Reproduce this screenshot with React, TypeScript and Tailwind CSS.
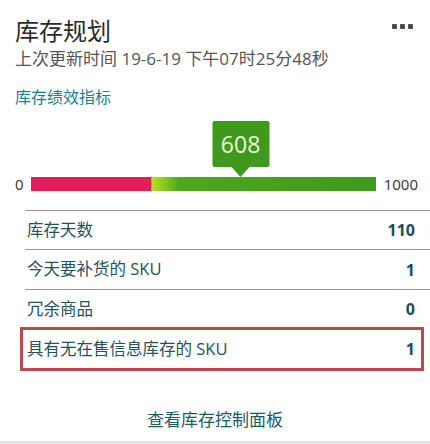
import React from 'react';

interface MetricRow {
    label: string;
    value: number;
}

const rows: MetricRow[] = [
    { label: '库存天数', value: 110 },
    { label: '今天要补货的 SKU', value: 1 },
    { label: '冗余商品', value: 0 },
];

const gaugeValue = 608;
const gaugeMax = 1000;

export default function App() {
    const pct = (gaugeValue / gaugeMax) * 100;

    return (
        <div className="w-[430px] h-[444px] bg-white flex flex-col font-['Open_Sans','Noto_Sans_CJK_SC',sans-serif] overflow-hidden">
            {/* Header */}
            <div className="px-[15px] pt-[14px]">
                <div className="flex justify-between items-start">
                    <h1 className="text-[24px] leading-[32px] h-[32px] text-[#2b2b2b] font-['Noto_Sans_CJK_SC',sans-serif]">库存规划</h1>
                    <div className="flex gap-[3px] mt-[10px] mr-[2px]">
                        <span className="w-[5px] h-[5px] rounded-[1px] bg-[#4a4a4a]"></span>
                        <span className="w-[5px] h-[5px] rounded-[1px] bg-[#4a4a4a]"></span>
                        <span className="w-[5px] h-[5px] rounded-[1px] bg-[#4a4a4a]"></span>
                    </div>
                </div>
                <p className="mt-[2px] text-[17px] leading-[22px] text-[#555555]">上次更新时间 19-6-19 下午07时25分48秒</p>
                <a className="block mt-[16px] text-[16px] leading-[22px] text-[#1a7f8e]">库存绩效指标</a>
            </div>

            {/* Gauge */}
            <div className="mt-[66px] flex items-center h-[20px] pl-[15px] pr-[12px] text-[15px] text-[#333333]">
                <span className="w-[16px]">0</span>
                <div className="relative flex-1 h-[14px] bg-[linear-gradient(to_right,#e11d5c_0%,#e11d5c_34.8%,#b6e31f_35%,#4fa71c_43%,#3f991c_100%)]">
                    <div className="absolute bottom-full -translate-x-1/2 flex flex-col items-center" style={{ left: `${pct}%` }}>
                        <div className="w-[57px] h-[46px] rounded-[2px] bg-[#3f991c] flex items-center justify-center text-[23px] text-[#eef8df]">
                            {gaugeValue}
                        </div>
                        <div className="w-0 h-0 border-l-[9px] border-r-[9px] border-t-[10px] border-l-transparent border-r-transparent border-t-[#3f991c]"></div>
                    </div>
                </div>
                <span className="ml-[8px]">1000</span>
            </div>

            {/* Metric rows */}
            <div className="mt-[16px] pl-[25px]">
                {rows.map((row, i) => (
                    <div
                        key={row.label}
                        className={`flex items-center justify-between border-t border-[#9a9a9a] pl-[2px] pr-[15px] ${i === 1 ? 'h-[40px]' : 'h-[39px]'}`}
                    >
                        <span className="text-[16.5px] text-[#28515a]">{row.label}</span>
                        <span className="text-[16px] font-bold text-[#174f58]">{row.value}</span>
                    </div>
                ))}
                <div className="-mt-[1px] -ml-[5px] mr-[6px] h-[44px] border-[3px] border-[#b94a4e] flex items-center justify-between pl-[4px] pr-[6px]">
                    <span className="text-[16.5px] text-[#28515a]">具有无在售信息库存的 SKU</span>
                    <span className="text-[16px] font-bold text-[#174f58]">1</span>
                </div>
            </div>

            {/* Footer link */}
            <div className="mt-[37px] text-center">
                <a className="text-[17px] leading-[24px] text-[#1e5a63]">查看库存控制面板</a>
            </div>

            <div className="mt-auto h-[3px] bg-[#e4e4e4]"></div>
        </div>
    );
}
